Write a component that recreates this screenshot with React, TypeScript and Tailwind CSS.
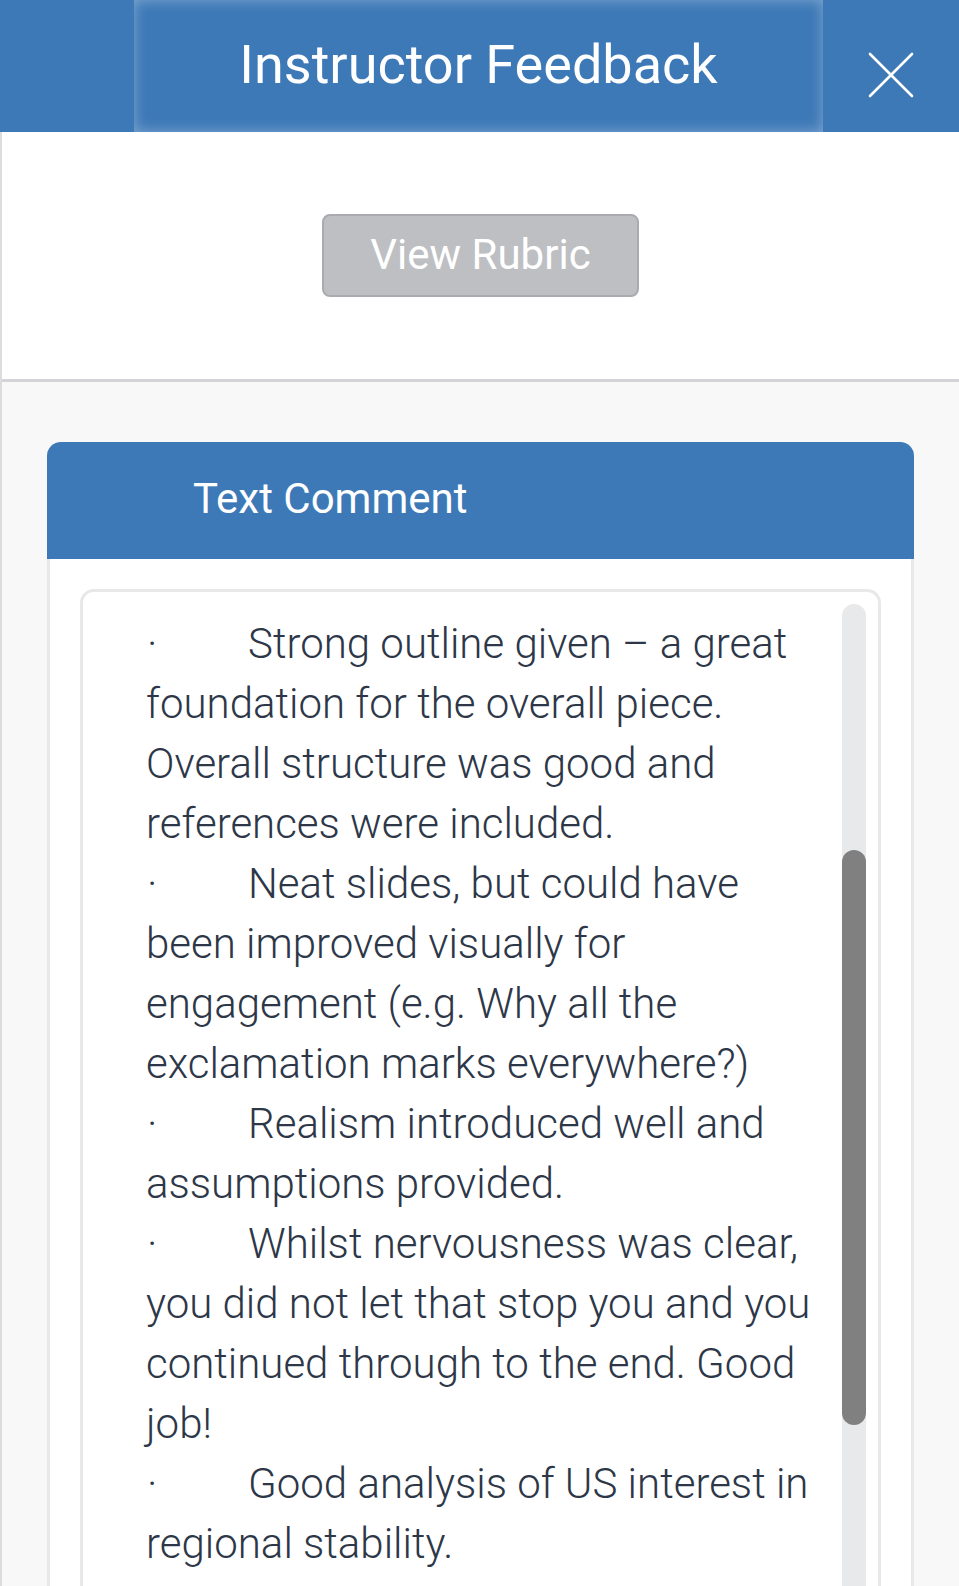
const COMMENTS = [
  'Strong outline given – a great foundation for the overall piece. Overall structure was good and references were included.',
  'Neat slides, but could have been improved visually for engagement (e.g. Why all the exclamation marks everywhere?)',
  'Realism introduced well and assumptions provided.',
  'Whilst nervousness was clear, you did not let that stop you and you continued through to the end. Good job!',
  'Good analysis of US interest in regional stability.',
];

function CloseIcon() {
  return (
    <svg width="46" height="46" viewBox="0 0 46 46" fill="none" stroke="white" strokeWidth="2.6" strokeLinecap="round">
      <path d="M2 2L44 44M44 2L2 44" />
    </svg>
  );
}

export default function App() {
  return (
    <div className="min-h-[1586px] bg-[#f8f8f8] font-['Roboto',sans-serif]">
      {/* top bar */}
      <div className="flex h-[132px] bg-[#3d79b7] text-white">
        <div className="w-[134px]" />
        <div className="flex flex-1 items-center justify-center shadow-[inset_0_0_14px_rgba(255,255,255,0.35)]">
          <h1 className="pb-[2px] text-[54px] leading-none">Instructor Feedback</h1>
        </div>
        <div className="flex w-[136px] items-center justify-center pt-[18px]">
          <CloseIcon />
        </div>
      </div>

      <div className="border-l-2 border-[#dcdcdc]">
        <div className="flex h-[250px] items-center justify-center border-b-[3px] border-[#d4d4d8] bg-white">
          <button className="h-[83px] w-[317px] rounded-[8px] border-2 border-[#a9abb0] bg-[#bebfc3] pb-[2px] text-[42px] text-white">
            View Rubric
          </button>
        </div>

        <div className="ml-[45px] mr-[45px] pt-[60px]">
          <div className="flex h-[117px] items-center rounded-t-[14px] bg-[#3d79b7] pb-[4px] pl-[146px]">
            <span className="text-[42px] text-white">Text Comment</span>
          </div>
          <div className="border-x-[3px] border-[#e8e8e8] bg-white px-[30px] pt-[30px]">
            <div className="relative rounded-[14px] border-[3px] border-[#e8e8e8] pb-[120px] pl-[63px] pr-[50px] pt-[22px]">
              <div className="text-[42px] font-light leading-[60px] text-[#2d3748]">
                {COMMENTS.map((c, i) => (
                  <div key={i}>
                    <span className="inline-block w-[102px] pl-[1px]">·</span>
                    {c}
                  </div>
                ))}
              </div>
              <div className="absolute bottom-[12px] right-[12px] top-[12px] w-[24px] rounded-full bg-[#e8e9eb]">
                <div className="absolute left-0 right-0 top-[246px] h-[575px] rounded-full bg-[#808080]" />
              </div>
            </div>
          </div>
        </div>
      </div>
    </div>
  );
}
